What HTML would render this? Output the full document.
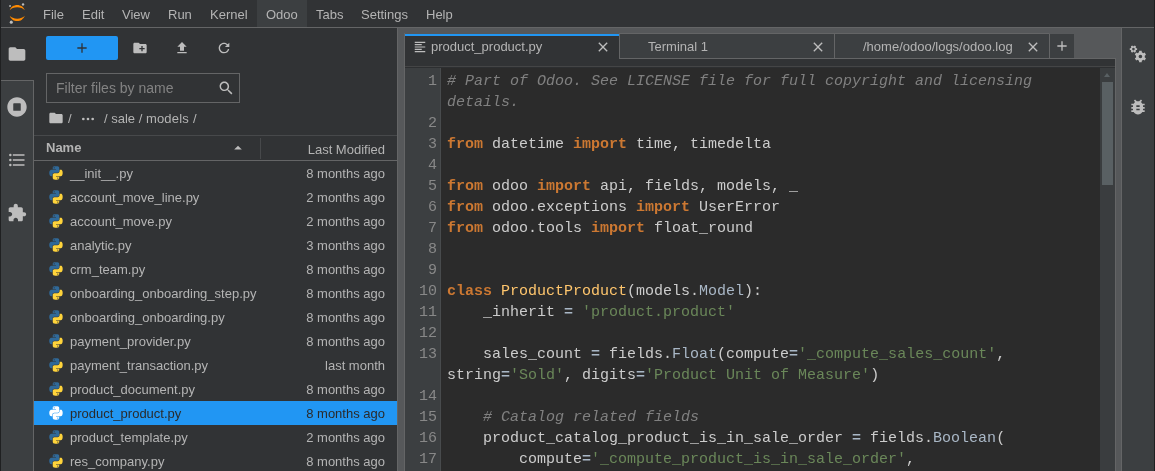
<!DOCTYPE html>
<html lang="en">
<head>
<meta charset="utf-8">
<title>JupyterLab</title>
<style>
*{box-sizing:border-box;margin:0;padding:0}
html,body{width:1155px;height:471px;overflow:hidden;background:#313335}
body{position:relative;font-family:"Liberation Sans",Arial,sans-serif;font-size:13px;color:#b4b4b4}
.abs{position:absolute}
#wrap{left:0;top:0;width:1155px;height:471px;will-change:transform}
svg{display:block}
/* menu bar */
#menubar{left:0;top:0;width:1155px;height:28px;background:#313335;border-bottom:1px solid #646566}
#menubar .mi{position:absolute;top:1px;height:27px;line-height:28px;white-space:nowrap}
#odoohl{left:257px;top:0;width:50px;height:27px;background:#3c3f41}
/* left border */
#lborder{left:0;top:0;width:1px;height:471px;background:#1f2021}
/* left sidebar */
#lsb{left:1px;top:80px;width:33px;height:391px;background:#3c3f41;border-top:1px solid #646566;border-right:1px solid #646566}
/* file browser */
#fb{left:34px;top:28px;width:363px;height:443px;background:#313335}
#newbtn{left:46px;top:36px;width:72px;height:24px;background:#2196f3;border-radius:2px}
#filter{left:46px;top:73px;width:194px;height:30px;border:1px solid #646566;background:#313335}
#filter span{position:absolute;left:9px;top:0;line-height:28px;font-size:14px;color:#838383;white-space:nowrap}
#crumbs{left:104px;top:111px;line-height:16px;white-space:nowrap;color:#b4b4b4}
#fhead{left:34px;top:135px;width:363px;height:26px;border-top:1px solid #47494b;border-bottom:1px solid #646566}
#fhead .nm{position:absolute;left:12px;top:0;line-height:23px;font-weight:bold}
#fhead .lm{position:absolute;right:12px;top:1px;line-height:26px}
#fhead .sep{position:absolute;left:226px;top:2px;width:1px;height:21px;background:#47494b}
.row{position:absolute;left:34px;width:363px;height:24px;line-height:24px;white-space:nowrap}
.row .ic{position:absolute;left:14px;top:4px;width:16px;height:16px}
.row .nm{position:absolute;left:36px;top:1px}
.row .md{position:absolute;right:12px;top:1px}
.row.sel{background:#2196f3;color:#2b2b2b}
/* dock */
#dock{left:397px;top:28px;width:725px;height:443px;background:#56585a;border-left:1px solid #646566}
#tab1{left:404px;top:34px;width:215px;height:32px;background:#313335;border-left:1px solid #646566}
#gl{left:404px;top:33px;width:1px;height:438px;background:#646566}
#tab1 .blue{position:absolute;left:0;top:0;width:214px;height:2px;background:#2196f3}
.tab{position:absolute;top:33px;height:26px;background:#3c3f41;border:1px solid #646566;border-top-color:#646566;border-right:none}
.tlabel{position:absolute;top:34px;line-height:26px;white-space:nowrap}
#band{left:405px;top:59px;width:710px;height:9px;background:#313335;border-bottom:1px solid #2d2f31}
#band i{position:absolute;left:0;top:7px;width:710px;height:1px;background:#444546}
#editor{left:405px;top:67px;width:710px;height:404px;background:#2b2b2b;overflow:hidden;border-top:1px solid #2d2f31}
#gutter{left:0;top:0;width:36px;height:404px;background:#3c3f41;border-right:1px solid #484b4d}
#scroll{left:695px;top:0;width:15px;height:404px;background:#3a3d3f}
#thumb{left:2px;top:14px;width:11px;height:103px;background:#596063}
#uparr{left:4px;top:5px;width:0;height:0;border-left:3.7px solid transparent;border-right:3.7px solid transparent;border-bottom:4px solid #596063}
.ln{position:absolute;left:0;width:32px;text-align:right;height:21px;line-height:21px;color:#888888;font-family:"Liberation Mono","DejaVu Sans Mono",monospace;font-size:15px}
.cl{position:absolute;left:42px;height:21px;line-height:21px;white-space:pre;color:#cccccc;font-family:"Liberation Mono","DejaVu Sans Mono",monospace;font-size:15px}
.k{color:#cc7832;font-weight:bold}
.c{color:#808080;font-style:italic}
.s{color:#6a8759}
.d{color:#ffc66d}
.p{color:#a9b7c6}
.o{color:#a9b7c6;font-weight:bold}
/* right sidebar */
#rsb{left:1121px;top:28px;width:33px;height:443px;background:#3c3f41;border-left:1px solid #646566}
#rborder{left:1154px;top:0;width:1px;height:471px;background:#1f2021}
</style>
</head>
<body>
<div id="wrap" class="abs">
<div id="menubar" class="abs">
  <div id="odoohl" class="abs"></div>
  <span class="mi" style="left:43px">File</span>
  <span class="mi" style="left:82px">Edit</span>
  <span class="mi" style="left:122px">View</span>
  <span class="mi" style="left:168px">Run</span>
  <span class="mi" style="left:210px">Kernel</span>
  <span class="mi" style="left:266px">Odoo</span>
  <span class="mi" style="left:316px">Tabs</span>
  <span class="mi" style="left:361px">Settings</span>
  <span class="mi" style="left:426px">Help</span>
</div>
<div id="fb" class="abs"></div>
<div id="lsb" class="abs"></div>
<div id="lborder" class="abs"></div>

<svg class="abs" style="left:9px;top:3px" width="16" height="21" viewBox="0 0 39 51" ><g transform="translate(-1638 -2281)"><g fill="#ff8a00"><path transform="translate(1639.74 2311.98)" d="M 18.2646 7.13411C 10.4145 7.13411 3.55872 4.2576 0 0C 1.32539 3.8204 3.79556 7.13081 7.0686 9.47303C 10.3417 11.8152 14.2557 13.0734 18.269 13.0734C 22.2823 13.0734 26.1963 11.8152 29.4694 9.47303C 32.7424 7.13081 35.2126 3.8204 36.538 0C 32.9705 4.2576 26.1148 7.13411 18.2646 7.13411Z"/><path transform="translate(1639.73 2285.48)" d="M 18.2733 5.93931C 26.1235 5.93931 32.9793 8.81583 36.538 13.0734C 35.2126 9.25303 32.7424 5.94262 29.4694 3.6004C 26.1963 1.25818 22.2823 0 18.269 0C 14.2557 0 10.3417 1.25818 7.0686 3.6004C 3.79556 5.94262 1.32539 9.25303 0 13.0734C 3.56745 8.82463 10.4232 5.93931 18.2733 5.93931Z"/></g><g fill="#bdbdbd"><circle cx="1672.25" cy="2284.27" r="2.95"/><circle cx="1643.52" cy="2327.54" r="3.72"/><circle cx="1640.54" cy="2288.26" r="2.18"/></g></g></svg>
<svg class="abs" style="left:7px;top:44px" width="20" height="20" viewBox="0 0 24 24" ><path fill="#bdbdbd" d="M10 4H4c-1.1 0-1.99.9-1.99 2L2 18c0 1.1.9 2 2 2h16c1.1 0 2-.9 2-2V8c0-1.1-.9-2-2-2h-8l-2-2z"/></svg>
<svg class="abs" style="left:7px;top:97px" width="20" height="20" viewBox="0 0 512 512" ><path fill="#bdbdbd" d="M256 8C119 8 8 119 8 256s111 248 248 248 248-111 248-248S393 8 256 8zm96 328c0 8.8-7.2 16-16 16H176c-8.8 0-16-7.2-16-16V176c0-8.8 7.2-16 16-16h160c8.8 0 16 7.2 16 16v160z"/></svg>
<svg class="abs" style="left:7px;top:150px" width="20" height="20" viewBox="0 0 24 24" ><path fill="#bdbdbd" d="M7,5H21V7H7V5M7,13V11H21V13H7M4,4.5A1.5,1.5 0 0,1 5.5,6A1.5,1.5 0 0,1 4,7.5A1.5,1.5 0 0,1 2.5,6A1.5,1.5 0 0,1 4,4.5M4,10.5A1.5,1.5 0 0,1 5.5,12A1.5,1.5 0 0,1 4,13.5A1.5,1.5 0 0,1 2.5,12A1.5,1.5 0 0,1 4,10.5M7,19V17H21V19H7M4,16.5A1.5,1.5 0 0,1 5.5,18A1.5,1.5 0 0,1 4,19.5A1.5,1.5 0 0,1 2.5,18A1.5,1.5 0 0,1 4,16.5Z"/></svg>
<svg class="abs" style="left:7px;top:203px" width="20" height="20" viewBox="0 0 24 24" ><path fill="#bdbdbd" d="M20.5 11H19V7c0-1.1-.9-2-2-2h-4V3.5C13 2.12 11.88 1 10.5 1S8 2.12 8 3.5V5H4c-1.1 0-1.99.9-1.99 2v3.8H3.5c1.49 0 2.7 1.21 2.7 2.7s-1.21 2.7-2.7 2.7H2V20c0 1.1.9 2 2 2h3.8v-1.5c0-1.49 1.21-2.7 2.7-2.7 1.49 0 2.7 1.21 2.7 2.7V22H17c1.1 0 2-.9 2-2v-4h1.5c1.38 0 2.5-1.12 2.5-2.5S21.88 11 20.5 11z"/></svg>
<svg class="abs" style="left:132px;top:40px" width="16" height="16" viewBox="0 0 24 24" ><path fill="#bdbdbd" d="M20 6h-8l-2-2H4c-1.11 0-1.99.89-1.99 2L2 18c0 1.11.89 2 2 2h16c1.11 0 2-.89 2-2V8c0-1.11-.89-2-2-2zm-1 8h-3v3h-2v-3h-3v-2h3V9h2v3h3v2z"/></svg>
<svg class="abs" style="left:174px;top:40px" width="16" height="16" viewBox="0 0 24 24" ><path fill="#bdbdbd" d="M9 16h6v-6h4l-7-7-7 7h4zm-4 2h14v2H5z"/></svg>
<svg class="abs" style="left:216px;top:40px" width="16" height="16" viewBox="0 0 18 18" ><path fill="#bdbdbd" d="M9 13.5c-2.49 0-4.5-2.01-4.5-4.5S6.51 4.5 9 4.5c1.24 0 2.36.52 3.17 1.33L10 8h5V3l-1.76 1.76C12.15 3.68 10.66 3 9 3 5.69 3 3.01 5.69 3.01 9S5.69 15 9 15c2.97 0 5.43-2.16 5.9-5h-1.52c-.46 2-2.24 3.5-4.38 3.5z"/></svg>
<svg class="abs" style="left:48px;top:110px" width="16" height="16" viewBox="0 0 24 24" ><path fill="#bdbdbd" d="M10 4H4c-1.1 0-1.99.9-1.99 2L2 18c0 1.1.9 2 2 2h16c1.1 0 2-.9 2-2V8c0-1.1-.9-2-2-2h-8l-2-2z"/></svg>
<svg class="abs" style="left:80px;top:111px" width="16" height="16" viewBox="0 0 24 24" ><g fill="#bdbdbd"><circle cx="5" cy="12" r="2"/><circle cx="12" cy="12" r="2"/><circle cx="19" cy="12" r="2"/></g></svg>
<svg class="abs" style="left:229px;top:139px" width="18" height="18" viewBox="0 0 18 18" ><path fill="#bdbdbd" d="M5.2,10.5L9,6.8l3.800,3.700H5.2z"/></svg>

<div id="newbtn" class="abs"></div>
<svg class="abs" style="left:74px;top:40px" width="16" height="16" viewBox="0 0 24 24" ><path fill="#2f3439" d="M19 13h-6v6h-2v-6H5v-2h6V5h2v6h6v2z"/></svg>
<div id="filter" class="abs"><span>Filter files by name</span></div>
<svg class="abs" style="left:218px;top:80px" width="16" height="16" viewBox="0 0 18 18" ><path fill="#bdbdbd" d="M12.1,10.9h-0.7l-0.2-0.2c0.8-0.9,1.3-2.2,1.3-3.5c0-3-2.4-5.4-5.4-5.4S1.8,4.2,1.8,7.1s2.4,5.4,5.4,5.4 c1.3,0,2.5-0.5,3.5-1.3l0.2,0.2v0.7l4.1,4.1l1.2-1.2L12.1,10.9z M7.1,10.9c-2.1,0-3.7-1.7-3.7-3.7s1.7-3.7,3.7-3.7s3.7,1.7,3.7,3.7 S9.2,10.9,7.1,10.9z"/></svg>
<div id="crumbs" class="abs">/ sale / <span style="letter-spacing:0.18px">models</span><span style="margin-left:0.5px"> /</span></div>
<div class="abs" style="left:68px;top:111px;line-height:16px;color:#b4b4b4">/</div>
<div id="fhead" class="abs"><span class="nm">Name</span><span class="sep"></span><span class="lm">Last Modified</span></div>

<div class="row" style="top:161px"><svg class="ic" width="16" height="16" viewBox="-10 -10 131.16 132.39"><path fill="#306998" d="M 54.918785,9.1927389e-4 C 50.335132,0.02221727 45.957846,0.41313697 42.106285,1.0946693 30.760069,3.0991731 28.700036,7.2947714 28.700035,15.032169 v 10.21875 h 26.8125 v 3.40625 h -26.8125 -10.0625 c -7.792459,0 -14.6157588,4.683717 -16.7499998,13.59375 -2.46181998,10.212966 -2.57101508,16.586023 0,27.25 1.9059283,7.937852 6.4575432,13.593748 14.2499998,13.59375 h 9.21875 v -12.25 c 0,-8.849902 7.657144,-16.656248 16.75,-16.65625 h 26.78125 c 7.454951,0 13.406253,-6.138164 13.40625,-13.625 v -25.53125 c 0,-7.2663386 -6.12998,-12.7247771 -13.40625,-13.9374997 C 64.281548,0.32794397 59.502438,-0.02037903 54.918785,9.1927389e-4 Z m -14.5,8.21875012611 c 2.769547,0 5.03125,2.2986456 5.03125,5.1249996 -2e-6,2.816336 -2.261703,5.09375 -5.03125,5.09375 -2.779476,-1e-6 -5.03125,-2.277415 -5.03125,-5.09375 -10e-7,-2.826353 2.251774,-5.1249996 5.03125,-5.1249996 z"/><path fill="#ffd43b" d="m 85.637535,28.657169 v 11.90625 c 0,9.230755 -7.825895,16.999999 -16.75,17 h -26.78125 c -7.335833,0 -13.406249,6.278483 -13.40625,13.625 v 25.531247 c 0,7.266344 6.318588,11.540324 13.40625,13.625004 8.487331,2.49561 16.626237,2.94663 26.78125,0 6.750155,-1.95439 13.406253,-5.88761 13.40625,-13.625004 V 86.500919 h -26.78125 v -3.40625 h 26.78125 13.406254 c 7.792461,0 10.696251,-5.435408 13.406241,-13.59375 2.79933,-8.398886 2.68022,-16.475776 0,-27.25 -1.92578,-7.757441 -5.60387,-13.59375 -13.406241,-13.59375 z m -15.0625,64.65625 c 2.779478,3e-6 5.03125,2.277417 5.03125,5.093747 -2e-6,2.826354 -2.251775,5.125004 -5.03125,5.125004 -2.76955,0 -5.03125,-2.29865 -5.03125,-5.125004 2e-6,-2.81633 2.261697,-5.093747 5.03125,-5.093747 z"/></svg><span class="nm">__init__.py</span><span class="md">8 months ago</span></div>
<div class="row" style="top:185px"><svg class="ic" width="16" height="16" viewBox="-10 -10 131.16 132.39"><path fill="#306998" d="M 54.918785,9.1927389e-4 C 50.335132,0.02221727 45.957846,0.41313697 42.106285,1.0946693 30.760069,3.0991731 28.700036,7.2947714 28.700035,15.032169 v 10.21875 h 26.8125 v 3.40625 h -26.8125 -10.0625 c -7.792459,0 -14.6157588,4.683717 -16.7499998,13.59375 -2.46181998,10.212966 -2.57101508,16.586023 0,27.25 1.9059283,7.937852 6.4575432,13.593748 14.2499998,13.59375 h 9.21875 v -12.25 c 0,-8.849902 7.657144,-16.656248 16.75,-16.65625 h 26.78125 c 7.454951,0 13.406253,-6.138164 13.40625,-13.625 v -25.53125 c 0,-7.2663386 -6.12998,-12.7247771 -13.40625,-13.9374997 C 64.281548,0.32794397 59.502438,-0.02037903 54.918785,9.1927389e-4 Z m -14.5,8.21875012611 c 2.769547,0 5.03125,2.2986456 5.03125,5.1249996 -2e-6,2.816336 -2.261703,5.09375 -5.03125,5.09375 -2.779476,-1e-6 -5.03125,-2.277415 -5.03125,-5.09375 -10e-7,-2.826353 2.251774,-5.1249996 5.03125,-5.1249996 z"/><path fill="#ffd43b" d="m 85.637535,28.657169 v 11.90625 c 0,9.230755 -7.825895,16.999999 -16.75,17 h -26.78125 c -7.335833,0 -13.406249,6.278483 -13.40625,13.625 v 25.531247 c 0,7.266344 6.318588,11.540324 13.40625,13.625004 8.487331,2.49561 16.626237,2.94663 26.78125,0 6.750155,-1.95439 13.406253,-5.88761 13.40625,-13.625004 V 86.500919 h -26.78125 v -3.40625 h 26.78125 13.406254 c 7.792461,0 10.696251,-5.435408 13.406241,-13.59375 2.79933,-8.398886 2.68022,-16.475776 0,-27.25 -1.92578,-7.757441 -5.60387,-13.59375 -13.406241,-13.59375 z m -15.0625,64.65625 c 2.779478,3e-6 5.03125,2.277417 5.03125,5.093747 -2e-6,2.826354 -2.251775,5.125004 -5.03125,5.125004 -2.76955,0 -5.03125,-2.29865 -5.03125,-5.125004 2e-6,-2.81633 2.261697,-5.093747 5.03125,-5.093747 z"/></svg><span class="nm">account_move_line.py</span><span class="md">2 months ago</span></div>
<div class="row" style="top:209px"><svg class="ic" width="16" height="16" viewBox="-10 -10 131.16 132.39"><path fill="#306998" d="M 54.918785,9.1927389e-4 C 50.335132,0.02221727 45.957846,0.41313697 42.106285,1.0946693 30.760069,3.0991731 28.700036,7.2947714 28.700035,15.032169 v 10.21875 h 26.8125 v 3.40625 h -26.8125 -10.0625 c -7.792459,0 -14.6157588,4.683717 -16.7499998,13.59375 -2.46181998,10.212966 -2.57101508,16.586023 0,27.25 1.9059283,7.937852 6.4575432,13.593748 14.2499998,13.59375 h 9.21875 v -12.25 c 0,-8.849902 7.657144,-16.656248 16.75,-16.65625 h 26.78125 c 7.454951,0 13.406253,-6.138164 13.40625,-13.625 v -25.53125 c 0,-7.2663386 -6.12998,-12.7247771 -13.40625,-13.9374997 C 64.281548,0.32794397 59.502438,-0.02037903 54.918785,9.1927389e-4 Z m -14.5,8.21875012611 c 2.769547,0 5.03125,2.2986456 5.03125,5.1249996 -2e-6,2.816336 -2.261703,5.09375 -5.03125,5.09375 -2.779476,-1e-6 -5.03125,-2.277415 -5.03125,-5.09375 -10e-7,-2.826353 2.251774,-5.1249996 5.03125,-5.1249996 z"/><path fill="#ffd43b" d="m 85.637535,28.657169 v 11.90625 c 0,9.230755 -7.825895,16.999999 -16.75,17 h -26.78125 c -7.335833,0 -13.406249,6.278483 -13.40625,13.625 v 25.531247 c 0,7.266344 6.318588,11.540324 13.40625,13.625004 8.487331,2.49561 16.626237,2.94663 26.78125,0 6.750155,-1.95439 13.406253,-5.88761 13.40625,-13.625004 V 86.500919 h -26.78125 v -3.40625 h 26.78125 13.406254 c 7.792461,0 10.696251,-5.435408 13.406241,-13.59375 2.79933,-8.398886 2.68022,-16.475776 0,-27.25 -1.92578,-7.757441 -5.60387,-13.59375 -13.406241,-13.59375 z m -15.0625,64.65625 c 2.779478,3e-6 5.03125,2.277417 5.03125,5.093747 -2e-6,2.826354 -2.251775,5.125004 -5.03125,5.125004 -2.76955,0 -5.03125,-2.29865 -5.03125,-5.125004 2e-6,-2.81633 2.261697,-5.093747 5.03125,-5.093747 z"/></svg><span class="nm">account_move.py</span><span class="md">2 months ago</span></div>
<div class="row" style="top:233px"><svg class="ic" width="16" height="16" viewBox="-10 -10 131.16 132.39"><path fill="#306998" d="M 54.918785,9.1927389e-4 C 50.335132,0.02221727 45.957846,0.41313697 42.106285,1.0946693 30.760069,3.0991731 28.700036,7.2947714 28.700035,15.032169 v 10.21875 h 26.8125 v 3.40625 h -26.8125 -10.0625 c -7.792459,0 -14.6157588,4.683717 -16.7499998,13.59375 -2.46181998,10.212966 -2.57101508,16.586023 0,27.25 1.9059283,7.937852 6.4575432,13.593748 14.2499998,13.59375 h 9.21875 v -12.25 c 0,-8.849902 7.657144,-16.656248 16.75,-16.65625 h 26.78125 c 7.454951,0 13.406253,-6.138164 13.40625,-13.625 v -25.53125 c 0,-7.2663386 -6.12998,-12.7247771 -13.40625,-13.9374997 C 64.281548,0.32794397 59.502438,-0.02037903 54.918785,9.1927389e-4 Z m -14.5,8.21875012611 c 2.769547,0 5.03125,2.2986456 5.03125,5.1249996 -2e-6,2.816336 -2.261703,5.09375 -5.03125,5.09375 -2.779476,-1e-6 -5.03125,-2.277415 -5.03125,-5.09375 -10e-7,-2.826353 2.251774,-5.1249996 5.03125,-5.1249996 z"/><path fill="#ffd43b" d="m 85.637535,28.657169 v 11.90625 c 0,9.230755 -7.825895,16.999999 -16.75,17 h -26.78125 c -7.335833,0 -13.406249,6.278483 -13.40625,13.625 v 25.531247 c 0,7.266344 6.318588,11.540324 13.40625,13.625004 8.487331,2.49561 16.626237,2.94663 26.78125,0 6.750155,-1.95439 13.406253,-5.88761 13.40625,-13.625004 V 86.500919 h -26.78125 v -3.40625 h 26.78125 13.406254 c 7.792461,0 10.696251,-5.435408 13.406241,-13.59375 2.79933,-8.398886 2.68022,-16.475776 0,-27.25 -1.92578,-7.757441 -5.60387,-13.59375 -13.406241,-13.59375 z m -15.0625,64.65625 c 2.779478,3e-6 5.03125,2.277417 5.03125,5.093747 -2e-6,2.826354 -2.251775,5.125004 -5.03125,5.125004 -2.76955,0 -5.03125,-2.29865 -5.03125,-5.125004 2e-6,-2.81633 2.261697,-5.093747 5.03125,-5.093747 z"/></svg><span class="nm">analytic.py</span><span class="md">3 months ago</span></div>
<div class="row" style="top:257px"><svg class="ic" width="16" height="16" viewBox="-10 -10 131.16 132.39"><path fill="#306998" d="M 54.918785,9.1927389e-4 C 50.335132,0.02221727 45.957846,0.41313697 42.106285,1.0946693 30.760069,3.0991731 28.700036,7.2947714 28.700035,15.032169 v 10.21875 h 26.8125 v 3.40625 h -26.8125 -10.0625 c -7.792459,0 -14.6157588,4.683717 -16.7499998,13.59375 -2.46181998,10.212966 -2.57101508,16.586023 0,27.25 1.9059283,7.937852 6.4575432,13.593748 14.2499998,13.59375 h 9.21875 v -12.25 c 0,-8.849902 7.657144,-16.656248 16.75,-16.65625 h 26.78125 c 7.454951,0 13.406253,-6.138164 13.40625,-13.625 v -25.53125 c 0,-7.2663386 -6.12998,-12.7247771 -13.40625,-13.9374997 C 64.281548,0.32794397 59.502438,-0.02037903 54.918785,9.1927389e-4 Z m -14.5,8.21875012611 c 2.769547,0 5.03125,2.2986456 5.03125,5.1249996 -2e-6,2.816336 -2.261703,5.09375 -5.03125,5.09375 -2.779476,-1e-6 -5.03125,-2.277415 -5.03125,-5.09375 -10e-7,-2.826353 2.251774,-5.1249996 5.03125,-5.1249996 z"/><path fill="#ffd43b" d="m 85.637535,28.657169 v 11.90625 c 0,9.230755 -7.825895,16.999999 -16.75,17 h -26.78125 c -7.335833,0 -13.406249,6.278483 -13.40625,13.625 v 25.531247 c 0,7.266344 6.318588,11.540324 13.40625,13.625004 8.487331,2.49561 16.626237,2.94663 26.78125,0 6.750155,-1.95439 13.406253,-5.88761 13.40625,-13.625004 V 86.500919 h -26.78125 v -3.40625 h 26.78125 13.406254 c 7.792461,0 10.696251,-5.435408 13.406241,-13.59375 2.79933,-8.398886 2.68022,-16.475776 0,-27.25 -1.92578,-7.757441 -5.60387,-13.59375 -13.406241,-13.59375 z m -15.0625,64.65625 c 2.779478,3e-6 5.03125,2.277417 5.03125,5.093747 -2e-6,2.826354 -2.251775,5.125004 -5.03125,5.125004 -2.76955,0 -5.03125,-2.29865 -5.03125,-5.125004 2e-6,-2.81633 2.261697,-5.093747 5.03125,-5.093747 z"/></svg><span class="nm">crm_team.py</span><span class="md">8 months ago</span></div>
<div class="row" style="top:281px"><svg class="ic" width="16" height="16" viewBox="-10 -10 131.16 132.39"><path fill="#306998" d="M 54.918785,9.1927389e-4 C 50.335132,0.02221727 45.957846,0.41313697 42.106285,1.0946693 30.760069,3.0991731 28.700036,7.2947714 28.700035,15.032169 v 10.21875 h 26.8125 v 3.40625 h -26.8125 -10.0625 c -7.792459,0 -14.6157588,4.683717 -16.7499998,13.59375 -2.46181998,10.212966 -2.57101508,16.586023 0,27.25 1.9059283,7.937852 6.4575432,13.593748 14.2499998,13.59375 h 9.21875 v -12.25 c 0,-8.849902 7.657144,-16.656248 16.75,-16.65625 h 26.78125 c 7.454951,0 13.406253,-6.138164 13.40625,-13.625 v -25.53125 c 0,-7.2663386 -6.12998,-12.7247771 -13.40625,-13.9374997 C 64.281548,0.32794397 59.502438,-0.02037903 54.918785,9.1927389e-4 Z m -14.5,8.21875012611 c 2.769547,0 5.03125,2.2986456 5.03125,5.1249996 -2e-6,2.816336 -2.261703,5.09375 -5.03125,5.09375 -2.779476,-1e-6 -5.03125,-2.277415 -5.03125,-5.09375 -10e-7,-2.826353 2.251774,-5.1249996 5.03125,-5.1249996 z"/><path fill="#ffd43b" d="m 85.637535,28.657169 v 11.90625 c 0,9.230755 -7.825895,16.999999 -16.75,17 h -26.78125 c -7.335833,0 -13.406249,6.278483 -13.40625,13.625 v 25.531247 c 0,7.266344 6.318588,11.540324 13.40625,13.625004 8.487331,2.49561 16.626237,2.94663 26.78125,0 6.750155,-1.95439 13.406253,-5.88761 13.40625,-13.625004 V 86.500919 h -26.78125 v -3.40625 h 26.78125 13.406254 c 7.792461,0 10.696251,-5.435408 13.406241,-13.59375 2.79933,-8.398886 2.68022,-16.475776 0,-27.25 -1.92578,-7.757441 -5.60387,-13.59375 -13.406241,-13.59375 z m -15.0625,64.65625 c 2.779478,3e-6 5.03125,2.277417 5.03125,5.093747 -2e-6,2.826354 -2.251775,5.125004 -5.03125,5.125004 -2.76955,0 -5.03125,-2.29865 -5.03125,-5.125004 2e-6,-2.81633 2.261697,-5.093747 5.03125,-5.093747 z"/></svg><span class="nm">onboarding_onboarding_step.py</span><span class="md">8 months ago</span></div>
<div class="row" style="top:305px"><svg class="ic" width="16" height="16" viewBox="-10 -10 131.16 132.39"><path fill="#306998" d="M 54.918785,9.1927389e-4 C 50.335132,0.02221727 45.957846,0.41313697 42.106285,1.0946693 30.760069,3.0991731 28.700036,7.2947714 28.700035,15.032169 v 10.21875 h 26.8125 v 3.40625 h -26.8125 -10.0625 c -7.792459,0 -14.6157588,4.683717 -16.7499998,13.59375 -2.46181998,10.212966 -2.57101508,16.586023 0,27.25 1.9059283,7.937852 6.4575432,13.593748 14.2499998,13.59375 h 9.21875 v -12.25 c 0,-8.849902 7.657144,-16.656248 16.75,-16.65625 h 26.78125 c 7.454951,0 13.406253,-6.138164 13.40625,-13.625 v -25.53125 c 0,-7.2663386 -6.12998,-12.7247771 -13.40625,-13.9374997 C 64.281548,0.32794397 59.502438,-0.02037903 54.918785,9.1927389e-4 Z m -14.5,8.21875012611 c 2.769547,0 5.03125,2.2986456 5.03125,5.1249996 -2e-6,2.816336 -2.261703,5.09375 -5.03125,5.09375 -2.779476,-1e-6 -5.03125,-2.277415 -5.03125,-5.09375 -10e-7,-2.826353 2.251774,-5.1249996 5.03125,-5.1249996 z"/><path fill="#ffd43b" d="m 85.637535,28.657169 v 11.90625 c 0,9.230755 -7.825895,16.999999 -16.75,17 h -26.78125 c -7.335833,0 -13.406249,6.278483 -13.40625,13.625 v 25.531247 c 0,7.266344 6.318588,11.540324 13.40625,13.625004 8.487331,2.49561 16.626237,2.94663 26.78125,0 6.750155,-1.95439 13.406253,-5.88761 13.40625,-13.625004 V 86.500919 h -26.78125 v -3.40625 h 26.78125 13.406254 c 7.792461,0 10.696251,-5.435408 13.406241,-13.59375 2.79933,-8.398886 2.68022,-16.475776 0,-27.25 -1.92578,-7.757441 -5.60387,-13.59375 -13.406241,-13.59375 z m -15.0625,64.65625 c 2.779478,3e-6 5.03125,2.277417 5.03125,5.093747 -2e-6,2.826354 -2.251775,5.125004 -5.03125,5.125004 -2.76955,0 -5.03125,-2.29865 -5.03125,-5.125004 2e-6,-2.81633 2.261697,-5.093747 5.03125,-5.093747 z"/></svg><span class="nm">onboarding_onboarding.py</span><span class="md">8 months ago</span></div>
<div class="row" style="top:329px"><svg class="ic" width="16" height="16" viewBox="-10 -10 131.16 132.39"><path fill="#306998" d="M 54.918785,9.1927389e-4 C 50.335132,0.02221727 45.957846,0.41313697 42.106285,1.0946693 30.760069,3.0991731 28.700036,7.2947714 28.700035,15.032169 v 10.21875 h 26.8125 v 3.40625 h -26.8125 -10.0625 c -7.792459,0 -14.6157588,4.683717 -16.7499998,13.59375 -2.46181998,10.212966 -2.57101508,16.586023 0,27.25 1.9059283,7.937852 6.4575432,13.593748 14.2499998,13.59375 h 9.21875 v -12.25 c 0,-8.849902 7.657144,-16.656248 16.75,-16.65625 h 26.78125 c 7.454951,0 13.406253,-6.138164 13.40625,-13.625 v -25.53125 c 0,-7.2663386 -6.12998,-12.7247771 -13.40625,-13.9374997 C 64.281548,0.32794397 59.502438,-0.02037903 54.918785,9.1927389e-4 Z m -14.5,8.21875012611 c 2.769547,0 5.03125,2.2986456 5.03125,5.1249996 -2e-6,2.816336 -2.261703,5.09375 -5.03125,5.09375 -2.779476,-1e-6 -5.03125,-2.277415 -5.03125,-5.09375 -10e-7,-2.826353 2.251774,-5.1249996 5.03125,-5.1249996 z"/><path fill="#ffd43b" d="m 85.637535,28.657169 v 11.90625 c 0,9.230755 -7.825895,16.999999 -16.75,17 h -26.78125 c -7.335833,0 -13.406249,6.278483 -13.40625,13.625 v 25.531247 c 0,7.266344 6.318588,11.540324 13.40625,13.625004 8.487331,2.49561 16.626237,2.94663 26.78125,0 6.750155,-1.95439 13.406253,-5.88761 13.40625,-13.625004 V 86.500919 h -26.78125 v -3.40625 h 26.78125 13.406254 c 7.792461,0 10.696251,-5.435408 13.406241,-13.59375 2.79933,-8.398886 2.68022,-16.475776 0,-27.25 -1.92578,-7.757441 -5.60387,-13.59375 -13.406241,-13.59375 z m -15.0625,64.65625 c 2.779478,3e-6 5.03125,2.277417 5.03125,5.093747 -2e-6,2.826354 -2.251775,5.125004 -5.03125,5.125004 -2.76955,0 -5.03125,-2.29865 -5.03125,-5.125004 2e-6,-2.81633 2.261697,-5.093747 5.03125,-5.093747 z"/></svg><span class="nm">payment_provider.py</span><span class="md">8 months ago</span></div>
<div class="row" style="top:353px"><svg class="ic" width="16" height="16" viewBox="-10 -10 131.16 132.39"><path fill="#306998" d="M 54.918785,9.1927389e-4 C 50.335132,0.02221727 45.957846,0.41313697 42.106285,1.0946693 30.760069,3.0991731 28.700036,7.2947714 28.700035,15.032169 v 10.21875 h 26.8125 v 3.40625 h -26.8125 -10.0625 c -7.792459,0 -14.6157588,4.683717 -16.7499998,13.59375 -2.46181998,10.212966 -2.57101508,16.586023 0,27.25 1.9059283,7.937852 6.4575432,13.593748 14.2499998,13.59375 h 9.21875 v -12.25 c 0,-8.849902 7.657144,-16.656248 16.75,-16.65625 h 26.78125 c 7.454951,0 13.406253,-6.138164 13.40625,-13.625 v -25.53125 c 0,-7.2663386 -6.12998,-12.7247771 -13.40625,-13.9374997 C 64.281548,0.32794397 59.502438,-0.02037903 54.918785,9.1927389e-4 Z m -14.5,8.21875012611 c 2.769547,0 5.03125,2.2986456 5.03125,5.1249996 -2e-6,2.816336 -2.261703,5.09375 -5.03125,5.09375 -2.779476,-1e-6 -5.03125,-2.277415 -5.03125,-5.09375 -10e-7,-2.826353 2.251774,-5.1249996 5.03125,-5.1249996 z"/><path fill="#ffd43b" d="m 85.637535,28.657169 v 11.90625 c 0,9.230755 -7.825895,16.999999 -16.75,17 h -26.78125 c -7.335833,0 -13.406249,6.278483 -13.40625,13.625 v 25.531247 c 0,7.266344 6.318588,11.540324 13.40625,13.625004 8.487331,2.49561 16.626237,2.94663 26.78125,0 6.750155,-1.95439 13.406253,-5.88761 13.40625,-13.625004 V 86.500919 h -26.78125 v -3.40625 h 26.78125 13.406254 c 7.792461,0 10.696251,-5.435408 13.406241,-13.59375 2.79933,-8.398886 2.68022,-16.475776 0,-27.25 -1.92578,-7.757441 -5.60387,-13.59375 -13.406241,-13.59375 z m -15.0625,64.65625 c 2.779478,3e-6 5.03125,2.277417 5.03125,5.093747 -2e-6,2.826354 -2.251775,5.125004 -5.03125,5.125004 -2.76955,0 -5.03125,-2.29865 -5.03125,-5.125004 2e-6,-2.81633 2.261697,-5.093747 5.03125,-5.093747 z"/></svg><span class="nm">payment_transaction.py</span><span class="md">last month</span></div>
<div class="row" style="top:377px"><svg class="ic" width="16" height="16" viewBox="-10 -10 131.16 132.39"><path fill="#306998" d="M 54.918785,9.1927389e-4 C 50.335132,0.02221727 45.957846,0.41313697 42.106285,1.0946693 30.760069,3.0991731 28.700036,7.2947714 28.700035,15.032169 v 10.21875 h 26.8125 v 3.40625 h -26.8125 -10.0625 c -7.792459,0 -14.6157588,4.683717 -16.7499998,13.59375 -2.46181998,10.212966 -2.57101508,16.586023 0,27.25 1.9059283,7.937852 6.4575432,13.593748 14.2499998,13.59375 h 9.21875 v -12.25 c 0,-8.849902 7.657144,-16.656248 16.75,-16.65625 h 26.78125 c 7.454951,0 13.406253,-6.138164 13.40625,-13.625 v -25.53125 c 0,-7.2663386 -6.12998,-12.7247771 -13.40625,-13.9374997 C 64.281548,0.32794397 59.502438,-0.02037903 54.918785,9.1927389e-4 Z m -14.5,8.21875012611 c 2.769547,0 5.03125,2.2986456 5.03125,5.1249996 -2e-6,2.816336 -2.261703,5.09375 -5.03125,5.09375 -2.779476,-1e-6 -5.03125,-2.277415 -5.03125,-5.09375 -10e-7,-2.826353 2.251774,-5.1249996 5.03125,-5.1249996 z"/><path fill="#ffd43b" d="m 85.637535,28.657169 v 11.90625 c 0,9.230755 -7.825895,16.999999 -16.75,17 h -26.78125 c -7.335833,0 -13.406249,6.278483 -13.40625,13.625 v 25.531247 c 0,7.266344 6.318588,11.540324 13.40625,13.625004 8.487331,2.49561 16.626237,2.94663 26.78125,0 6.750155,-1.95439 13.406253,-5.88761 13.40625,-13.625004 V 86.500919 h -26.78125 v -3.40625 h 26.78125 13.406254 c 7.792461,0 10.696251,-5.435408 13.406241,-13.59375 2.79933,-8.398886 2.68022,-16.475776 0,-27.25 -1.92578,-7.757441 -5.60387,-13.59375 -13.406241,-13.59375 z m -15.0625,64.65625 c 2.779478,3e-6 5.03125,2.277417 5.03125,5.093747 -2e-6,2.826354 -2.251775,5.125004 -5.03125,5.125004 -2.76955,0 -5.03125,-2.29865 -5.03125,-5.125004 2e-6,-2.81633 2.261697,-5.093747 5.03125,-5.093747 z"/></svg><span class="nm">product_document.py</span><span class="md">8 months ago</span></div>
<div class="row sel" style="top:401px"><svg class="ic" width="16" height="16" viewBox="-10 -10 131.16 132.39"><path fill="#ffffff" d="M 54.918785,9.1927389e-4 C 50.335132,0.02221727 45.957846,0.41313697 42.106285,1.0946693 30.760069,3.0991731 28.700036,7.2947714 28.700035,15.032169 v 10.21875 h 26.8125 v 3.40625 h -26.8125 -10.0625 c -7.792459,0 -14.6157588,4.683717 -16.7499998,13.59375 -2.46181998,10.212966 -2.57101508,16.586023 0,27.25 1.9059283,7.937852 6.4575432,13.593748 14.2499998,13.59375 h 9.21875 v -12.25 c 0,-8.849902 7.657144,-16.656248 16.75,-16.65625 h 26.78125 c 7.454951,0 13.406253,-6.138164 13.40625,-13.625 v -25.53125 c 0,-7.2663386 -6.12998,-12.7247771 -13.40625,-13.9374997 C 64.281548,0.32794397 59.502438,-0.02037903 54.918785,9.1927389e-4 Z m -14.5,8.21875012611 c 2.769547,0 5.03125,2.2986456 5.03125,5.1249996 -2e-6,2.816336 -2.261703,5.09375 -5.03125,5.09375 -2.779476,-1e-6 -5.03125,-2.277415 -5.03125,-5.09375 -10e-7,-2.826353 2.251774,-5.1249996 5.03125,-5.1249996 z"/><path fill="#ffffff" d="m 85.637535,28.657169 v 11.90625 c 0,9.230755 -7.825895,16.999999 -16.75,17 h -26.78125 c -7.335833,0 -13.406249,6.278483 -13.40625,13.625 v 25.531247 c 0,7.266344 6.318588,11.540324 13.40625,13.625004 8.487331,2.49561 16.626237,2.94663 26.78125,0 6.750155,-1.95439 13.406253,-5.88761 13.40625,-13.625004 V 86.500919 h -26.78125 v -3.40625 h 26.78125 13.406254 c 7.792461,0 10.696251,-5.435408 13.406241,-13.59375 2.79933,-8.398886 2.68022,-16.475776 0,-27.25 -1.92578,-7.757441 -5.60387,-13.59375 -13.406241,-13.59375 z m -15.0625,64.65625 c 2.779478,3e-6 5.03125,2.277417 5.03125,5.093747 -2e-6,2.826354 -2.251775,5.125004 -5.03125,5.125004 -2.76955,0 -5.03125,-2.29865 -5.03125,-5.125004 2e-6,-2.81633 2.261697,-5.093747 5.03125,-5.093747 z"/></svg><span class="nm">product_product.py</span><span class="md">8 months ago</span></div>
<div class="row" style="top:425px"><svg class="ic" width="16" height="16" viewBox="-10 -10 131.16 132.39"><path fill="#306998" d="M 54.918785,9.1927389e-4 C 50.335132,0.02221727 45.957846,0.41313697 42.106285,1.0946693 30.760069,3.0991731 28.700036,7.2947714 28.700035,15.032169 v 10.21875 h 26.8125 v 3.40625 h -26.8125 -10.0625 c -7.792459,0 -14.6157588,4.683717 -16.7499998,13.59375 -2.46181998,10.212966 -2.57101508,16.586023 0,27.25 1.9059283,7.937852 6.4575432,13.593748 14.2499998,13.59375 h 9.21875 v -12.25 c 0,-8.849902 7.657144,-16.656248 16.75,-16.65625 h 26.78125 c 7.454951,0 13.406253,-6.138164 13.40625,-13.625 v -25.53125 c 0,-7.2663386 -6.12998,-12.7247771 -13.40625,-13.9374997 C 64.281548,0.32794397 59.502438,-0.02037903 54.918785,9.1927389e-4 Z m -14.5,8.21875012611 c 2.769547,0 5.03125,2.2986456 5.03125,5.1249996 -2e-6,2.816336 -2.261703,5.09375 -5.03125,5.09375 -2.779476,-1e-6 -5.03125,-2.277415 -5.03125,-5.09375 -10e-7,-2.826353 2.251774,-5.1249996 5.03125,-5.1249996 z"/><path fill="#ffd43b" d="m 85.637535,28.657169 v 11.90625 c 0,9.230755 -7.825895,16.999999 -16.75,17 h -26.78125 c -7.335833,0 -13.406249,6.278483 -13.40625,13.625 v 25.531247 c 0,7.266344 6.318588,11.540324 13.40625,13.625004 8.487331,2.49561 16.626237,2.94663 26.78125,0 6.750155,-1.95439 13.406253,-5.88761 13.40625,-13.625004 V 86.500919 h -26.78125 v -3.40625 h 26.78125 13.406254 c 7.792461,0 10.696251,-5.435408 13.406241,-13.59375 2.79933,-8.398886 2.68022,-16.475776 0,-27.25 -1.92578,-7.757441 -5.60387,-13.59375 -13.406241,-13.59375 z m -15.0625,64.65625 c 2.779478,3e-6 5.03125,2.277417 5.03125,5.093747 -2e-6,2.826354 -2.251775,5.125004 -5.03125,5.125004 -2.76955,0 -5.03125,-2.29865 -5.03125,-5.125004 2e-6,-2.81633 2.261697,-5.093747 5.03125,-5.093747 z"/></svg><span class="nm">product_template.py</span><span class="md">2 months ago</span></div>
<div class="row" style="top:449px"><svg class="ic" width="16" height="16" viewBox="-10 -10 131.16 132.39"><path fill="#306998" d="M 54.918785,9.1927389e-4 C 50.335132,0.02221727 45.957846,0.41313697 42.106285,1.0946693 30.760069,3.0991731 28.700036,7.2947714 28.700035,15.032169 v 10.21875 h 26.8125 v 3.40625 h -26.8125 -10.0625 c -7.792459,0 -14.6157588,4.683717 -16.7499998,13.59375 -2.46181998,10.212966 -2.57101508,16.586023 0,27.25 1.9059283,7.937852 6.4575432,13.593748 14.2499998,13.59375 h 9.21875 v -12.25 c 0,-8.849902 7.657144,-16.656248 16.75,-16.65625 h 26.78125 c 7.454951,0 13.406253,-6.138164 13.40625,-13.625 v -25.53125 c 0,-7.2663386 -6.12998,-12.7247771 -13.40625,-13.9374997 C 64.281548,0.32794397 59.502438,-0.02037903 54.918785,9.1927389e-4 Z m -14.5,8.21875012611 c 2.769547,0 5.03125,2.2986456 5.03125,5.1249996 -2e-6,2.816336 -2.261703,5.09375 -5.03125,5.09375 -2.779476,-1e-6 -5.03125,-2.277415 -5.03125,-5.09375 -10e-7,-2.826353 2.251774,-5.1249996 5.03125,-5.1249996 z"/><path fill="#ffd43b" d="m 85.637535,28.657169 v 11.90625 c 0,9.230755 -7.825895,16.999999 -16.75,17 h -26.78125 c -7.335833,0 -13.406249,6.278483 -13.40625,13.625 v 25.531247 c 0,7.266344 6.318588,11.540324 13.40625,13.625004 8.487331,2.49561 16.626237,2.94663 26.78125,0 6.750155,-1.95439 13.406253,-5.88761 13.40625,-13.625004 V 86.500919 h -26.78125 v -3.40625 h 26.78125 13.406254 c 7.792461,0 10.696251,-5.435408 13.406241,-13.59375 2.79933,-8.398886 2.68022,-16.475776 0,-27.25 -1.92578,-7.757441 -5.60387,-13.59375 -13.406241,-13.59375 z m -15.0625,64.65625 c 2.779478,3e-6 5.03125,2.277417 5.03125,5.093747 -2e-6,2.826354 -2.251775,5.125004 -5.03125,5.125004 -2.76955,0 -5.03125,-2.29865 -5.03125,-5.125004 2e-6,-2.81633 2.261697,-5.093747 5.03125,-5.093747 z"/></svg><span class="nm">res_company.py</span><span class="md">8 months ago</span></div>

<div id="dock" class="abs"></div>
<div id="band" class="abs"><i></i></div>
<div id="gl" class="abs"></div>
<div class="abs" style="left:1115px;top:58px;width:1px;height:413px;background:#646566"></div>
<div class="abs" style="left:405px;top:58px;width:710px;height:1px;background:#646566"></div>
<div id="tab1" class="abs"><div class="blue"></div></div>
<div class="tab" style="left:619px;width:215px"></div>
<div class="tab" style="left:834px;width:215px"></div>
<div class="tab" style="left:1049px;width:25px;border-top-color:#57595b"></div>
<div class="tlabel" style="left:431px;top:34px;line-height:26px">product_product.py</div>
<div class="tlabel" style="left:648px">Terminal 1</div>
<div class="tlabel" style="left:863px">/home/odoo/logs/odoo.log</div>

<svg class="abs" style="left:413px;top:40px" width="14" height="14" viewBox="0 0 24 24" ><path fill="#bdbdbd" d="M15 15H3v2h12v-2zm0-8H3v2h12V7zM3 13h18v-2H3v2zm0 8h18v-2H3v2zM3 3v2h18V3H3z"/></svg>
<svg class="abs" style="left:595px;top:39px" width="16" height="16" viewBox="0 0 24 24" ><path fill="#bdbdbd" d="M19 6.41L17.59 5 12 10.59 6.41 5 5 6.41 10.59 12 5 17.59 6.41 19 12 13.41 17.59 19 19 17.59 13.41 12z"/></svg>
<svg class="abs" style="left:810px;top:39px" width="16" height="16" viewBox="0 0 24 24" ><path fill="#bdbdbd" d="M19 6.41L17.59 5 12 10.59 6.41 5 5 6.41 10.59 12 5 17.59 6.41 19 12 13.41 17.59 19 19 17.59 13.41 12z"/></svg>
<svg class="abs" style="left:1025px;top:39px" width="16" height="16" viewBox="0 0 24 24" ><path fill="#bdbdbd" d="M19 6.41L17.59 5 12 10.59 6.41 5 5 6.41 10.59 12 5 17.59 6.41 19 12 13.41 17.59 19 19 17.59 13.41 12z"/></svg>
<svg class="abs" style="left:1054px;top:38px" width="16" height="16" viewBox="0 0 24 24" ><path fill="#bdbdbd" d="M19 13h-6v6h-2v-6H5v-2h6V5h2v6h6v2z"/></svg>

<div id="editor" class="abs">
  <div id="gutter" class="abs"></div>
<div class="ln" style="top:3px">1</div>
<div class="cl" style="top:3px"><span class="c"># Part of Odoo. See LICENSE file for full copyright and licensing</span></div>
<div class="cl" style="top:24px"><span class="c">details.</span></div>
<div class="ln" style="top:45px">2</div>
<div class="ln" style="top:66px">3</div>
<div class="cl" style="top:66px"><span class="k">from</span> datetime <span class="k">import</span> time, timedelta</div>
<div class="ln" style="top:87px">4</div>
<div class="ln" style="top:108px">5</div>
<div class="cl" style="top:108px"><span class="k">from</span> odoo <span class="k">import</span> api, fields, models, _</div>
<div class="ln" style="top:129px">6</div>
<div class="cl" style="top:129px"><span class="k">from</span> odoo.exceptions <span class="k">import</span> UserError</div>
<div class="ln" style="top:150px">7</div>
<div class="cl" style="top:150px"><span class="k">from</span> odoo.tools <span class="k">import</span> float_round</div>
<div class="ln" style="top:171px">8</div>
<div class="ln" style="top:192px">9</div>
<div class="ln" style="top:213px">10</div>
<div class="cl" style="top:213px"><span class="k">class</span> <span class="d">ProductProduct</span>(models.<span class="p">Model</span>):</div>
<div class="ln" style="top:234px">11</div>
<div class="cl" style="top:234px">    _inherit <span class="o">=</span> <span class="s">'product.product'</span></div>
<div class="ln" style="top:255px">12</div>
<div class="ln" style="top:276px">13</div>
<div class="cl" style="top:276px">    sales_count <span class="o">=</span> fields.<span class="p">Float</span>(compute<span class="o">=</span><span class="s">'_compute_sales_count'</span>,</div>
<div class="cl" style="top:297px">string<span class="o">=</span><span class="s">'Sold'</span>, digits<span class="o">=</span><span class="s">'Product Unit of Measure'</span>)</div>
<div class="ln" style="top:318px">14</div>
<div class="ln" style="top:339px">15</div>
<div class="cl" style="top:339px">    <span class="c"># Catalog related fields</span></div>
<div class="ln" style="top:360px">16</div>
<div class="cl" style="top:360px">    product_catalog_product_is_in_sale_order <span class="o">=</span> fields.<span class="p">Boolean</span>(</div>
<div class="ln" style="top:381px">17</div>
<div class="cl" style="top:381px">        compute<span class="o">=</span><span class="s">'_compute_product_is_in_sale_order'</span>,</div>
  <div id="scroll" class="abs"><div id="uparr" class="abs"></div><div id="thumb" class="abs"></div></div>
</div>
<div id="rsb" class="abs"></div>
<div id="rborder" class="abs"></div>

<svg class="abs" style="left:1128px;top:44px" width="20" height="20" viewBox="0 0 24 24" ><path fill="#bdbdbd" fill-rule="evenodd" d="M20.10,16.05 L21.58,17.09 L20.05,19.74 L18.40,18.98 L16.59,20.02 L16.43,21.83 L13.37,21.83 L13.21,20.02 L11.40,18.98 L9.75,19.74 L8.22,17.09 L9.70,16.05 L9.70,13.95 L8.22,12.91 L9.75,10.26 L11.40,11.02 L13.21,9.98 L13.37,8.17 L16.43,8.17 L16.59,9.98 L18.40,11.02 L20.05,10.26 L21.58,12.91 L20.10,13.95Z M17.10,15.00 A2.2,2.2 0 1,0 12.70,15.00 A2.2,2.2 0 1,0 17.10,15.00Z"/><path fill="#bdbdbd" fill-rule="evenodd" d="M9.75,5.01 L10.92,5.11 L10.92,7.07 L9.75,7.17 L9.08,8.34 L9.58,9.40 L7.88,10.38 L7.20,9.42 L5.86,9.42 L5.18,10.38 L3.48,9.40 L3.98,8.34 L3.31,7.17 L2.14,7.07 L2.14,5.11 L3.31,5.01 L3.98,3.84 L3.48,2.78 L5.18,1.80 L5.86,2.76 L7.20,2.76 L7.88,1.80 L9.58,2.78 L9.08,3.84Z M8.10,6.09 A1.57,1.57 0 1,0 4.96,6.09 A1.57,1.57 0 1,0 8.10,6.09Z"/></svg>
<svg class="abs" style="left:1128px;top:97px" width="20" height="20" viewBox="0 0 24 24" ><path fill="#bdbdbd" d="M20 8h-2.81c-.45-.78-1.07-1.45-1.82-1.96L17 4.41 15.59 3l-2.17 2.17C12.96 5.06 12.49 5 12 5c-.49 0-.96.06-1.41.17L8.41 3 7 4.41l1.62 1.63C7.88 6.55 7.26 7.22 6.810 8H4v2h2.090c-.05.33-.09.66-.09 1v1H4v2h2v1c0 .34.04.67.09 1H4v2h2.81c1.04 1.79 2.97 3 5.19 3s4.15-1.21 5.19-3H20v-2h-2.090c.05-.33.09-.66.09-1v-1h2v-2h-2v-1c0-.34-.04-.67-.09-1H20V8zm-6 8h-4v-2h4v2zm0-4h-4v-2h4v2z"/></svg>

</div>
</body>
</html>
